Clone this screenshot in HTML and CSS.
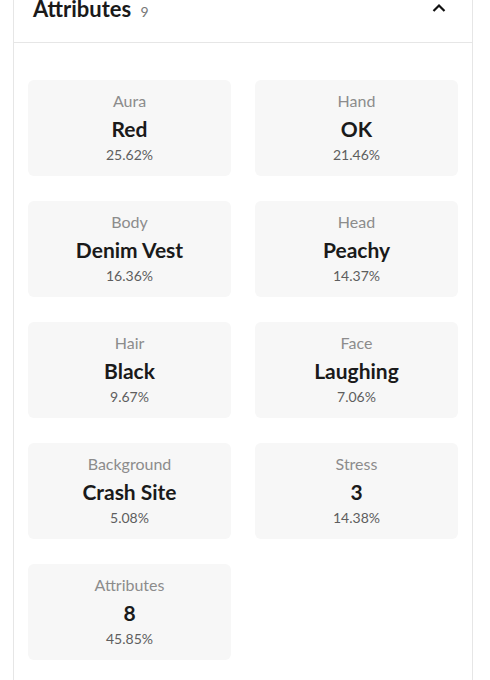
FILE: index.html
```html
<!DOCTYPE html>
<html>
<head>
<meta charset="utf-8">
<link rel="stylesheet" href="styles.css">
</head>
<body>
<section class="panel">
  <header class="panel-head">
    <h2 class="title">Attributes <span class="count">9</span></h2>
    <svg class="chev" width="14" height="10" viewBox="0 0 14 10"><path d="M1.5 8 L7 2.5 L12.5 8" fill="none" stroke="#111" stroke-width="2.2"/></svg>
  </header>
  <div class="grid">
    <div class="card"><div class="label">Aura</div><div class="value">Red</div><div class="pct">25.62%</div></div>
    <div class="card"><div class="label">Hand</div><div class="value">OK</div><div class="pct">21.46%</div></div>
    <div class="card"><div class="label">Body</div><div class="value">Denim Vest</div><div class="pct">16.36%</div></div>
    <div class="card"><div class="label">Head</div><div class="value">Peachy</div><div class="pct">14.37%</div></div>
    <div class="card"><div class="label">Hair</div><div class="value">Black</div><div class="pct">9.67%</div></div>
    <div class="card"><div class="label">Face</div><div class="value">Laughing</div><div class="pct">7.06%</div></div>
    <div class="card"><div class="label">Background</div><div class="value">Crash Site</div><div class="pct">5.08%</div></div>
    <div class="card"><div class="label">Stress</div><div class="value">3</div><div class="pct">14.38%</div></div>
    <div class="card"><div class="label">Attributes</div><div class="value">8</div><div class="pct">45.85%</div></div>
  </div>
</section>
</body>
</html>
```
FILE: styles.css
```css
html, body {
  margin: 0;
  padding: 0;
  background: #fff;
  font-family: Lato, "Noto Sans", sans-serif;
}
.panel {
  margin: -22px 0 0 13px;
  width: 458px;
  border: 1px solid #e6e6e6;
  border-top: none;
}
.panel-head {
  display: flex;
  align-items: center;
  justify-content: space-between;
  padding: 17px 26px 16px 19px;
  border-bottom: 1px solid #e6e6e6;
}
.title {
  margin: 0;
  font-size: 22px;
  line-height: 28px;
  font-weight: 700;
  color: #1a1a1a;
}
.count {
  font-size: 14px;
  font-weight: 400;
  color: #777;
  margin-left: 4px;
}
.chev {
  display: block;
  margin-top: -6px;
}
.grid {
  display: grid;
  grid-template-columns: 1fr 1fr;
  column-gap: 24px;
  row-gap: 25px;
  padding: 37px 14px 20px;
}
.card {
  background: #f7f7f7;
  border-radius: 6px;
  text-align: center;
  padding: 10px 0 10px;
}
.label {
  font-size: 16px;
  line-height: 22px;
  color: #8c8c8c;
}
.value {
  margin-top: 3px;
  font-size: 21px;
  line-height: 28px;
  font-weight: 700;
  color: #1a1a1a;
}
.pct {
  margin-top: 1px;
  font-size: 14px;
  line-height: 22px;
  color: #5e5e5e;
}
```
